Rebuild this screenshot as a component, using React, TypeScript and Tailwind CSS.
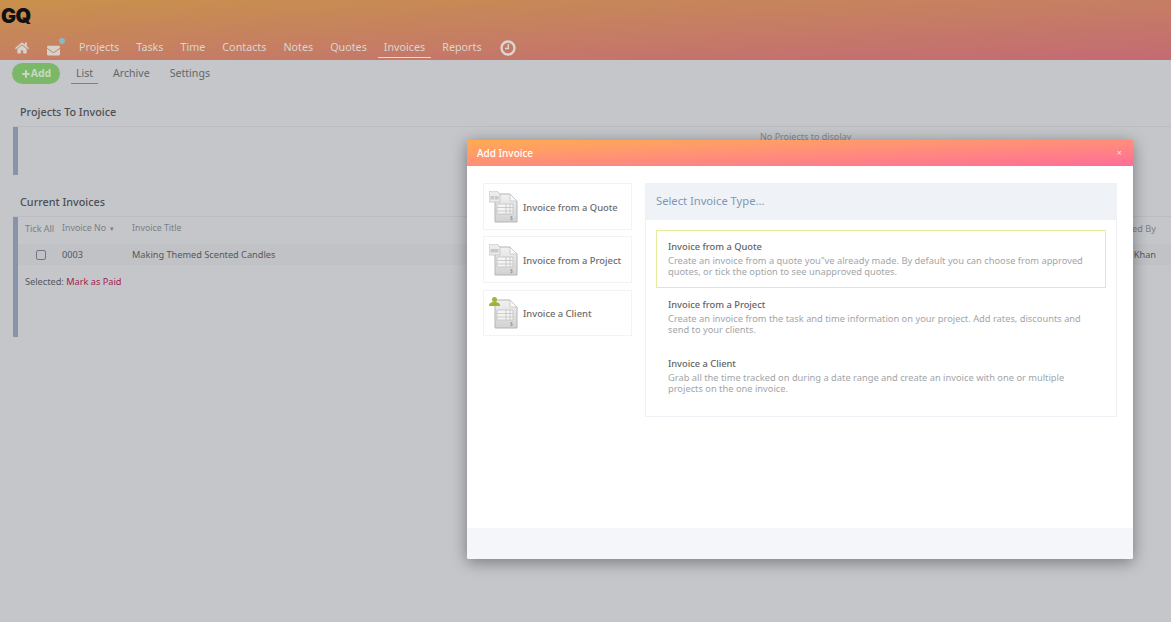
import { Plus } from "lucide-react"
import { FaEnvelope, FaHome } from "react-icons/fa"

const font = { fontFamily: '"Noto Sans", "Open Sans", sans-serif' }

const NavItem = ({ label, active }: { label: string; active?: boolean }) => (
  <a className={`block h-[23px] px-[6px] leading-[24px] text-[10.75px] text-[#dad6d0] ${active ? "border-b border-[#e2ddd8]" : ""}`}>{label}</a>
)

// sheet with table grid, the overlay corner changes per card
const DocIcon = ({ kind }: { kind: "quote" | "project" | "client" }) => (
  <svg width="30" height="32" viewBox="0 0 30 32" className="shrink-0">
    <defs>
      <linearGradient id={`sheet-${kind}`} x1="0" y1="0" x2="0" y2="1">
        <stop offset="0" stopColor="#f1f1f1" />
        <stop offset="1" stopColor="#d2d2d2" />
      </linearGradient>
    </defs>
    <path d="M6 3h15l7 7v21H6z" fill={`url(#sheet-${kind})`} stroke="#b5b5b5" strokeWidth="1" />
    <path d="M21 3v7h7z" fill="#fafafa" stroke="#c4c4c4" strokeWidth="0.8" />
    <path d="M8 13h16v10H8z" fill="#f4f4f4" stroke="#bcbcbc" strokeWidth="0.7" />
    <path d="M8 16.500h16M8 20h16M17 13v10M21 13v10" stroke="#bcbcbc" strokeWidth="0.7" />
    <text x="21" y="29" fontSize="5" fill="#8c8c8c" style={font}>$</text>
    {kind === "client" ? (
      <g fill="#a3b13c">
        <circle cx="5.500" cy="2.500" r="2.500" />
        <path d="M0 9c0-3 2-4 5.500-4s5.500 1 5.500 4z" />
      </g>
    ) : (
      <g>
        <path d="M0 0h8l3 3v8H0z" fill="#ececec" stroke="#bdbdbd" strokeWidth="0.7" />
        <path d="M1.500 5h8v3.500h-8z" fill="#c9c9c9" />
        {kind === "quote" && <path d="M5.500 5v3.500" stroke="#f2f2f2" strokeWidth="0.7" />}
      </g>
    )}
  </svg>
)

const TypeCard = ({ kind, label, className }: { kind: "quote" | "project" | "client"; label: string; className?: string }) => (
  <div className={`flex items-center gap-[4px] border border-[#f1f3f7] pl-[5px] text-[9.4px] font-medium text-[#6b6b6b] ${className ?? "h-[47px]"}`}>
    <DocIcon kind={kind} />
    <span className="pt-[3px]">{label}</span>
  </div>
)

const TypeOption = ({ title, text, active, className }: { title: string; text: string; active?: boolean; className: string }) => (
  <div className={`border pl-[11px] pr-[20px] text-[#a3a5a8] ${active ? "border-[#e6ee9e]" : "border-transparent"} ${className}`}>
    <div className="text-[9.3px] font-medium leading-[14px] text-[#636363]">{title}</div>
    <p className="mt-px text-[9.3px] leading-[11px]">{text}</p>
  </div>
)

const App = () => {
  return (
    <div className="relative h-[622px] w-[1171px] overflow-hidden bg-[#c4c6ca]" style={font}>
      {/* Top bar */}
      <header className="h-[60px] bg-gradient-to-br from-[#c8914a] to-[#c36a74]">
        <div className="h-[35px] pl-px pt-[3px] font-['Inter'] text-[20px] font-black leading-[26px] tracking-[-0.5px] text-[#111]">GQ</div>
        <nav className="flex items-start pl-[15px]">
          <FaHome size={14} className="mt-[6px] text-[#d5d2ce]" />
          <div className="relative ml-[18px] mt-[9px] mr-[13px]">
            <FaEnvelope size={13} className="text-[#d5d2ce]" />
            <span className="absolute -right-[5px] -top-[6px] h-[6px] w-[6px] rounded-full bg-[#8fb5c6]" />
          </div>
          <div className="flex gap-[5px]">
            <NavItem label="Projects" />
            <NavItem label="Tasks" />
            <NavItem label="Time" />
            <NavItem label="Contacts" />
            <NavItem label="Notes" />
            <NavItem label="Quotes" />
            <NavItem label="Invoices" active />
            <NavItem label="Reports" />
          </div>
          <svg width="16" height="16" viewBox="0 0 16 16" className="ml-[12px] mt-[5px]">
            <circle cx="8" cy="8" r="6.500" fill="none" stroke="#dad6d0" strokeWidth="2.400" />
            <path d="M8.300 4v4.500H5" fill="none" stroke="#dad6d0" strokeWidth="1.500" />
          </svg>
        </nav>
      </header>

      {/* Sub nav */}
      <div className="flex h-[24px] items-start pl-[12px] pt-[3px]">
        <button className="flex h-[21px] w-[48px] items-center justify-center rounded-full bg-[#7bb868] text-[10.5px] font-bold text-[#c8d8c2]">
          <Plus size={10} strokeWidth={5} />
          Add
        </button>
        <div className="ml-[11px] flex gap-[15px] text-[10.6px] leading-[20px] text-[#62666b]">
          <span className="w-[27px] border-b border-[#6f8299] text-center">List</span>
          <span>Archive</span>
          <span className="ml-[5px]">Settings</span>
        </div>
      </div>

      {/* Projects to invoice */}
      <section className="pt-[18px]">
        <h2 className="pl-[20px] text-[10.8px] font-medium leading-[20px] text-[#4c4f53]">Projects To Invoice</h2>
        <div className="ml-[13px] mt-[4px] border-t border-[#babcc1]">
          <div className="h-[48px] border-l-[5px] border-[#8795a8] pl-[742px] text-[9px] leading-[20px] text-[#85878b]">No Projects to display</div>
        </div>
      </section>

      {/* Current invoices */}
      <section className="pt-[17px]">
        <h2 className="pl-[20px] text-[10.8px] font-medium leading-[20px] text-[#4c4f53]">Current Invoices</h2>
        <div className="ml-[13px] mt-[4px] border-t border-[#babcc1]">
          <div className="h-[120px] border-l-[5px] border-[#8795a8] text-[9.2px] text-[#55585d]">
            <div className="flex h-[27px] items-start justify-between pr-[15px] pt-[5px] text-[#7c7e83]">
              <div className="flex items-center">
                <span className="ml-[7px] w-[37px] text-[9px]">Tick All</span>
                <span className="w-[70px] text-[8.8px]">
                  Invoice No <span className="ml-[2px] text-[7px]">▾</span>
                </span>
                <span className="text-[8.8px]">Invoice Title</span>
              </div>
              <span>Created By</span>
            </div>
            <div className="flex h-[21px] items-center justify-between bg-[#c0c2c6] pr-[15px]">
              <div className="flex items-center">
                <span className="ml-[18px] mt-px h-[10px] w-[10px] rounded-[2px] border border-[#6d7784]" />
                <span className="ml-[16px] w-[70px]">0003</span>
                <span>Making Themed Scented Candles</span>
              </div>
              <span>Ali Khan</span>
            </div>
            <div className="pl-[7px] pt-[10px] leading-[14px]">
              Selected: <span className="text-[#a0234d]">Mark as Paid</span>
            </div>
          </div>
        </div>
      </section>

      {/* Add invoice modal */}
      <div className="absolute left-[467px] top-[140px] flex h-[419px] w-[666px] flex-col rounded-[2px] bg-white shadow-[0_3px_16px_rgba(0,0,0,0.4)]">
        <div className="flex h-[26px] items-center justify-between bg-gradient-to-br from-[#ffab4e] to-[#ff6c96] pl-[10px] pr-[11px] text-[10px] font-medium text-white">
          <span>Add Invoice</span>
          <span className="text-[9px] text-[#ffd9e0]">×</span>
        </div>
        <div className="flex flex-1 gap-[13px] pl-[16px] pr-[16px] pt-[17px]">
          <div className="flex w-[149px] flex-col">
            <TypeCard kind="quote" label="Invoice from a Quote" />
            <TypeCard kind="project" label="Invoice from a Project" className="mt-[6px] h-[47px]" />
            <TypeCard kind="client" label="Invoice a Client" className="mt-[7px] h-[46px]" />
          </div>
          <div className="h-[234px] flex-1 border border-[#eff1f6]">
            <div className="h-[36px] bg-[#eff2f6] pl-[10px] text-[11.2px] leading-[34px] text-[#7f97b8]">Select Invoice Type...</div>
            <div className="flex flex-col px-[10px] pt-[10px]">
              <TypeOption
                active
                className="h-[58px] pt-[9px]"
                title="Invoice from a Quote"
                text="Create an invoice from a quote you&quot;ve already made. By default you can choose from approved quotes, or tick the option to see unapproved quotes."
              />
              <TypeOption
                className="h-[59px] pt-[9px]"
                title="Invoice from a Project"
                text="Create an invoice from the task and time information on your project. Add rates, discounts and send to your clients."
              />
              <TypeOption
                className="h-[59px] pt-[9px]"
                title="Invoice a Client"
                text="Grab all the time tracked on during a date range and create an invoice with one or multiple projects on the one invoice."
              />
            </div>
          </div>
        </div>
        <div className="h-[31px] rounded-b-[2px] bg-[#f5f6f9]" />
      </div>
    </div>
  )
}

export default App
